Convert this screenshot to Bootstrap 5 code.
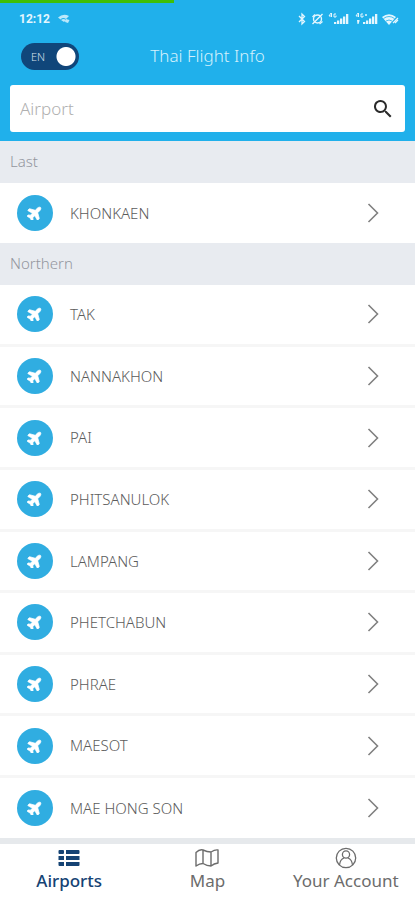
<!DOCTYPE html>
<html lang="en">
<head>
<meta charset="utf-8">
<meta name="viewport" content="width=device-width, initial-scale=1">
<title>Thai Flight Info</title>
<link href="https://cdn.jsdelivr.net/npm/bootstrap@5.3.0/dist/css/bootstrap.min.css" rel="stylesheet">
<style>
body { font-family: "Noto Sans", "Open Sans", sans-serif; color: #6c6c6c; background: #fff; }
.app-head { background: #20b0eb; padding-bottom: 9px; }
.load-track { height: 3px; --bs-progress-bg: transparent; --bs-progress-bar-bg: #3fbf08; }
.status { height: 31px; padding: 0 15px 0 19px; color: #e4f6fe; }
.clock { font: 700 12px/16px Roboto, sans-serif; }
.title-bar { height: 44px; padding: 0 21px; grid-template-columns: 1fr auto 1fr; }
.app-title { font-size: 17px; font-weight: 300; line-height: 24px; color: #d4f0fc; }
.lang { width: 58px; height: 27px; }
.lang > * { grid-area: 1 / 1; }
.lang-input { appearance: none; margin: 0; width: 58px; height: 27px; border-radius: 14px; background: #10467a radial-gradient(circle at 45px 50%, #fff 9px, transparent 10px); }
.lang-text { font-size: 11px; font-weight: 300; line-height: 27px; padding-left: 10px; color: #d5e0ea; pointer-events: none; }
.search { margin: 7px 10px 0; height: 47px; border-radius: 3px; padding: 0 10px 0 10px; }
.search .form-control { font-size: 17px; font-weight: 300; line-height: 24px; color: #555; }
.search .form-control::placeholder { color: #b0b0b0; }
.section-name { background: #e8ebf0; color: #93969e; font-size: 15px; font-weight: 300; line-height: 40px; padding: 0 0 2px 10px; }
.airport { padding: 0 36px 0 17px; min-height: 60px; color: #5c5c5c; font-size: 15px; font-weight: 300; gap: 17px; }
.airport-list .airport { border-width: 0 0 3px; border-color: #f6f6f6; }
.airport-list .airport:last-child { border-color: #fff; }
.plane-dot { width: 36px; height: 36px; background: #30ade1; }
.tabs { border-top: 6px solid #e6e9ec; background: #fff; height: 62px; }
.tab { color: #6c6c6c; font-size: 17px; font-weight: 400; line-height: 24px; padding-top: 3px; }
.tab.active { color: #154374; }
.tab svg { height: 22px; }
</style>
</head>
<body>
<svg class="d-none" aria-hidden="true">
  <symbol id="plane" viewBox="0 0 576 512"><path transform="rotate(-45 288 256)" fill="#fff" stroke="#fff" stroke-width="24" d="M480 192H365.710L260.610 8.060A16 16 0 0 0 246.700 0h-65.500c-10.630 0-18.300 10.170-15.380 20.390L214.860 192H112l-43.200-57.600c-3-4-7.770-6.400-12.800-6.400H16C5.600 128-2 137.780.5 147.880L32 256 .5 364.120C-2 374.220 5.600 384 16 384h40c5 0 9.780-2.370 12.800-6.400L112 320h102.860l-49 171.600c-2.920 10.220 4.750 20.400 15.380 20.400h65.500c5.740 0 11-3 13.890-8L365.710 320H480c35.350 0 96-28.650 96-64s-60.650-64-96-64z"/></symbol>
  <symbol id="next" viewBox="0 0 12 20"><path fill="none" stroke="#808080" stroke-width="1.600" d="M1.500 1 10.500 10 1.500 19"/></symbol>
</svg>
<div class="d-flex flex-column min-vh-100">
  <header class="app-head">
    <div class="progress load-track rounded-0" role="progressbar" aria-label="Loading" aria-valuenow="42" aria-valuemin="0" aria-valuemax="100"><div class="progress-bar" style="width:42%"></div></div>
    <div class="status d-flex align-items-center gap-2">
      <span class="clock">12:12</span>
      <svg width="12" height="10" viewBox="0 0 12 10" fill="currentColor" opacity=".8"><path d="M0 3.500Q5-1 11 2L8 5Q5 3 2.500 5.500ZM3 6Q5.500 4 8 6L6 8ZM8 5 11.500 6 10 9 7 8Z"/></svg>
      <svg class="ms-auto" width="103" height="14" viewBox="0 0 103 14" fill="none" stroke="currentColor">
        <path stroke-width="1.300" d="M2 4 7.500 9.500 5 12V2L7.500 4.500 2 10"/>
        <g stroke-width="1.400"><circle cx="20.500" cy="7" r="4"/><path d="M15.500 12 25.500 2M15.500 5 18 2.500M22.500 12 25.500 9.500"/></g>
        <path fill="currentColor" stroke="none" d="M37 10h2.300v2H37zM40 8.500h2.300V12H40zM43 6.500h2.300V12H43zM46 4.500h2.300V12H46zM49 2h2.300v10H49z"/>
        <path stroke-width="1" d="M34 1 32 4H35M34.500 1V5M39 2H37V5H39V3.500"/>
        <path fill="currentColor" stroke="none" d="M66 10h2.300v2H66zM69 8.500h2.300V12H69zM72 6.500h2.300V12H72zM75 4.500h2.300V12H75zM78 2h2.300v10H78zM60 8h2.500v1l-1 3h-1z"/>
        <path stroke-width="1" d="M61 1 59 4H62M61.500 1V5M66 2H64V5H66V3.500M68 3H70M69 2V4"/>
        <path fill="currentColor" stroke="none" d="M85 5Q92-.5 99 5L92 13Z"/><path stroke="#20b0eb" stroke-width=".8" d="M86.500 6.500Q92 2.500 97.500 6.500M89 9Q92 7 95 9"/><path stroke-width="1.200" d="M96 11 101 6M98 11 101 8"/>
      </svg>
    </div>
    <div class="title-bar d-grid align-items-center">
      <div class="lang d-grid">
        <input class="lang-input" type="checkbox" role="switch" id="lang" checked>
        <label class="lang-text" for="lang">EN</label>
      </div>
      <h1 class="app-title m-0">Thai Flight Info</h1>
    </div>
    <form class="search bg-white d-flex align-items-center" role="search">
      <input class="form-control border-0 p-0 shadow-none bg-transparent" type="text" placeholder="Airport" aria-label="Airport">
      <button class="btn border-0 p-0 lh-1" type="button" aria-label="Search"><svg width="24" height="24" viewBox="0 0 24 24" fill="#2b2b2b"><path d="M15.500 14h-.8l-.3-.3A6.500 6.500 0 1 0 13.700 14.400l.3.300v.8l5 5 1.500-1.500zM9.500 14a4.500 4.500 0 1 1 0-9 4.500 4.500 0 0 1 0 9z"/></svg></button>
    </form>
  </header>
  <main class="d-flex flex-column flex-grow-1">
    <h2 class="section-name m-0">Last</h2>
    <div class="list-group list-group-flush">
      <a href="#" class="airport list-group-item d-flex align-items-center"><span class="plane-dot rounded-circle d-flex align-items-center justify-content-center"><svg width="16" height="14"><use href="#plane"/></svg></span><span>KHONKAEN</span><svg class="ms-auto" width="12" height="20"><use href="#next"/></svg></a>
    </div>
    <h2 class="section-name m-0">Northern</h2>
    <div class="list-group list-group-flush airport-list flex-grow-1">
      <a href="#" class="airport list-group-item flex-fill d-flex align-items-center"><span class="plane-dot rounded-circle d-flex align-items-center justify-content-center"><svg width="16" height="14"><use href="#plane"/></svg></span><span>TAK</span><svg class="ms-auto" width="12" height="20"><use href="#next"/></svg></a>
      <a href="#" class="airport list-group-item flex-fill d-flex align-items-center"><span class="plane-dot rounded-circle d-flex align-items-center justify-content-center"><svg width="16" height="14"><use href="#plane"/></svg></span><span>NANNAKHON</span><svg class="ms-auto" width="12" height="20"><use href="#next"/></svg></a>
      <a href="#" class="airport list-group-item flex-fill d-flex align-items-center"><span class="plane-dot rounded-circle d-flex align-items-center justify-content-center"><svg width="16" height="14"><use href="#plane"/></svg></span><span>PAI</span><svg class="ms-auto" width="12" height="20"><use href="#next"/></svg></a>
      <a href="#" class="airport list-group-item flex-fill d-flex align-items-center"><span class="plane-dot rounded-circle d-flex align-items-center justify-content-center"><svg width="16" height="14"><use href="#plane"/></svg></span><span>PHITSANULOK</span><svg class="ms-auto" width="12" height="20"><use href="#next"/></svg></a>
      <a href="#" class="airport list-group-item flex-fill d-flex align-items-center"><span class="plane-dot rounded-circle d-flex align-items-center justify-content-center"><svg width="16" height="14"><use href="#plane"/></svg></span><span>LAMPANG</span><svg class="ms-auto" width="12" height="20"><use href="#next"/></svg></a>
      <a href="#" class="airport list-group-item flex-fill d-flex align-items-center"><span class="plane-dot rounded-circle d-flex align-items-center justify-content-center"><svg width="16" height="14"><use href="#plane"/></svg></span><span>PHETCHABUN</span><svg class="ms-auto" width="12" height="20"><use href="#next"/></svg></a>
      <a href="#" class="airport list-group-item flex-fill d-flex align-items-center"><span class="plane-dot rounded-circle d-flex align-items-center justify-content-center"><svg width="16" height="14"><use href="#plane"/></svg></span><span>PHRAE</span><svg class="ms-auto" width="12" height="20"><use href="#next"/></svg></a>
      <a href="#" class="airport list-group-item flex-fill d-flex align-items-center"><span class="plane-dot rounded-circle d-flex align-items-center justify-content-center"><svg width="16" height="14"><use href="#plane"/></svg></span><span>MAESOT</span><svg class="ms-auto" width="12" height="20"><use href="#next"/></svg></a>
      <a href="#" class="airport list-group-item flex-fill d-flex align-items-center"><span class="plane-dot rounded-circle d-flex align-items-center justify-content-center"><svg width="16" height="14"><use href="#plane"/></svg></span><span>MAE HONG SON</span><svg class="ms-auto" width="12" height="20"><use href="#next"/></svg></a>
    </div>
  </main>
  <nav class="tabs sticky-bottom row g-0 text-center" aria-label="Main">
    <a href="#" class="tab active fw-medium col text-decoration-none d-flex flex-column align-items-center" aria-current="page"><svg width="22" height="22" viewBox="0 0 22 22" fill="currentColor"><path d="M1.500 3H5q1 0 1 1v2q0 1-1 1H1.500q-1 0-1-1V4q0-1 1-1zM8 3h12.500q1 0 1 1v2q0 1-1 1H8zM.5 9H6v4H.5zM8 9h13.500v4H8zM.5 15H6v4H1.500q-1 0-1-1zM8 15h13.500v3q0 1-1 1H8z"/></svg>Airports</a>
    <a href="#" class="tab col text-decoration-none d-flex flex-column align-items-center"><svg width="26" height="22" viewBox="0 0 26 22" fill="none" stroke="currentColor" stroke-width="1.400" stroke-linejoin="round"><path d="M2 5.500Q5.500 2 9 3Q13 5 17 5Q21 2.500 24 3V16Q20 16.500 17 19Q13 19 9 16.500Q5.500 16.500 2 19ZM9 3V16.500M17 5V19"/></svg>Map</a>
    <a href="#" class="tab col text-decoration-none d-flex flex-column align-items-center text-nowrap"><svg width="22" height="22" viewBox="0 0 22 22" fill="none" stroke="currentColor" stroke-width="1.300"><circle cx="11" cy="11" r="9.700"/><circle cx="11" cy="7.500" r="3.600"/><path d="M4.500 18Q5 12.500 9 11M17.500 18Q17 12.500 13 11"/></svg>Your Account</a>
  </nav>
</div>
<script src="https://cdn.jsdelivr.net/npm/bootstrap@5.3.0/dist/js/bootstrap.bundle.min.js"></script>
</body>
</html>
